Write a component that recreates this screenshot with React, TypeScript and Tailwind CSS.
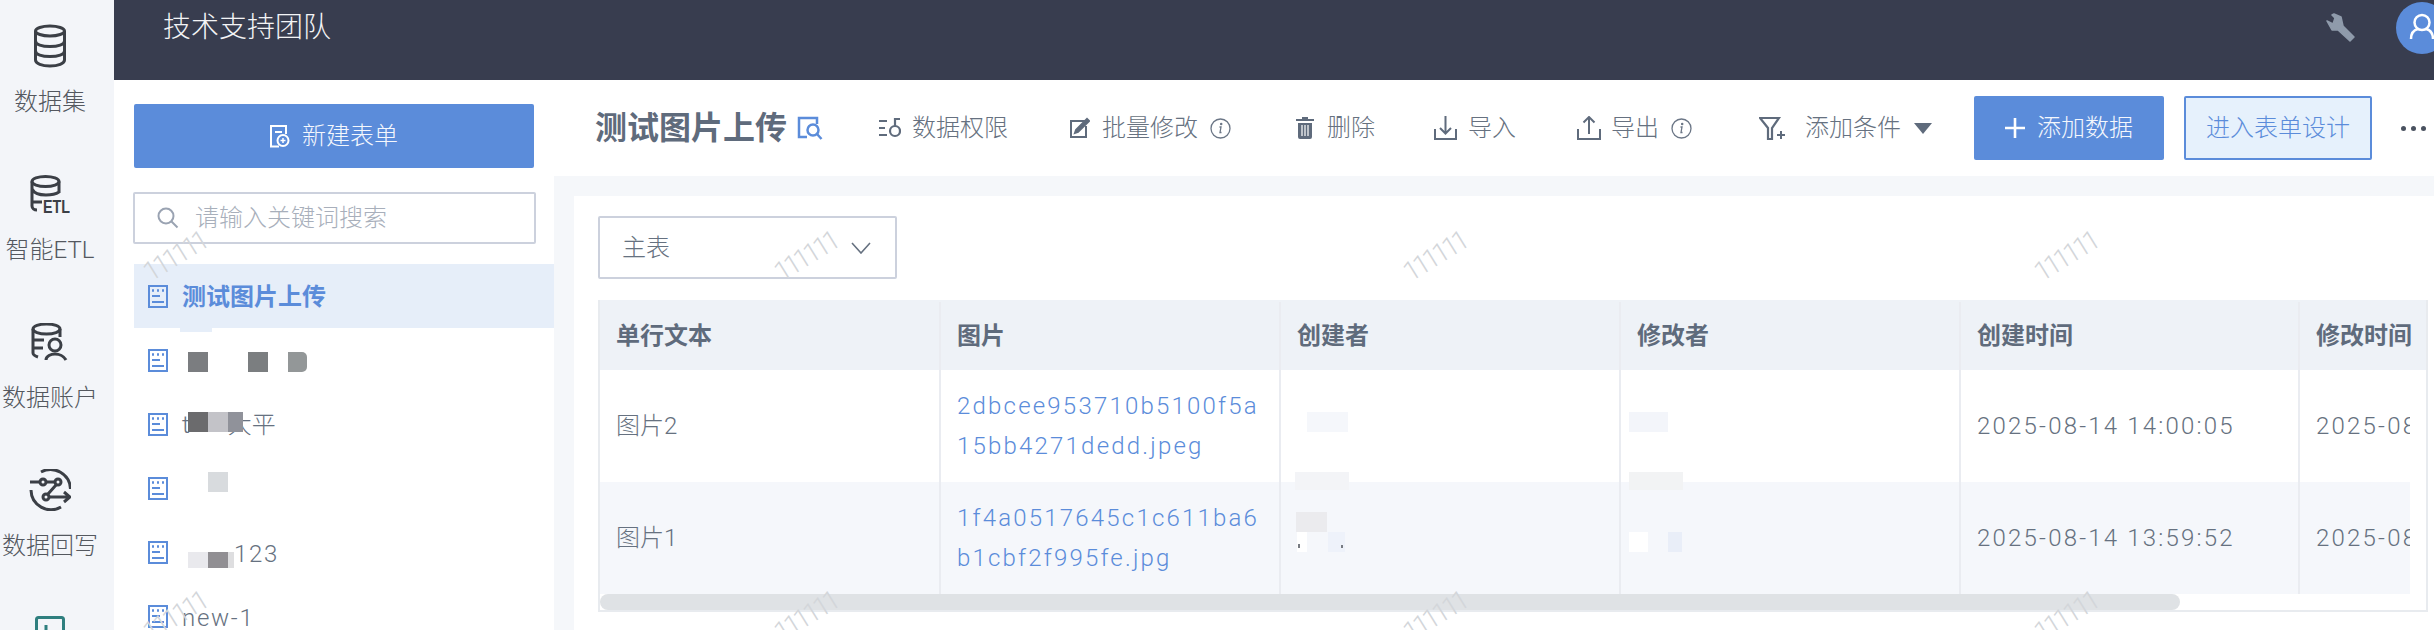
import React from "react";

const FONT = "font-['Roboto','Noto_Sans_CJK_SC',sans-serif]";

const RailIcon = ({ kind }: { kind: number }) => {
  if (kind === 0) {
    return (
      <svg width="36" height="44" viewBox="0 0 34 44" fill="none" stroke="#3b3f46" strokeWidth="3">
        <ellipse cx="17" cy="7" rx="14.5" ry="5" />
        <path d="M2.5 7v29c0 3.5 6.5 6 14.5 6s14.5-2.5 14.5-6V7" />
        <path d="M2.5 17c0 3.5 6.5 5.5 14.5 5.5s14.5-2 14.5-5.5M2.5 27c0 3.5 6.5 5.5 14.5 5.5s14.5-2 14.5-5.5" />
      </svg>
    );
  }
  if (kind === 1) {
    return (
      <svg width="40" height="39" viewBox="0 0 40 39" fill="none" stroke="#3b3f46" strokeWidth="3">
        <ellipse cx="15.5" cy="6.5" rx="13.5" ry="5" />
        <path d="M2 6.5V31c0 2 2 4 5 4M29 6.5V18M2 14c2 4 8 6 14 6 5 0 10-1 13-3M3 27h9" />
        <text x="13" y="38" fontFamily="'Liberation Sans',sans-serif" fontWeight="700" fontSize="18" fill="#3b3f46" stroke="none" textLength="27" lengthAdjust="spacingAndGlyphs">ETL</text>
      </svg>
    );
  }
  if (kind === 2) {
    return (
      <svg width="38" height="38" viewBox="0 0 38 38" fill="none" stroke="#3b3f46" strokeWidth="3">
        <ellipse cx="15.5" cy="6" rx="13.5" ry="5" />
        <path d="M2 6v24c0 2 2 3 5 4M29 6v8M3 17h10M3 25h9" />
        <circle cx="24" cy="22" r="6" />
        <path d="M15 37c0-4 5-6 9-6s9 2 11 6" />
      </svg>
    );
  }
  if (kind === 3) {
    return (
      <svg width="42" height="42" viewBox="0 0 42 42" fill="none" stroke="#3b3f46" strokeWidth="3">
        <path d="M12 3A20 20 0 0 1 41.5 20M2 21A20 20 0 0 0 32 38" />
        <path d="M1 13h10M17 13h9M27 16l-8 9M20 28h21M35 23l6 5-6 5" />
        <circle cx="14" cy="13" r="3" />
        <circle cx="29" cy="13" r="3" />
        <circle cx="17" cy="28" r="3" />
      </svg>
    );
  }
  return (
    <svg width="30" height="44" viewBox="0 0 30 44" fill="none" stroke="#2f7f7f" strokeWidth="3">
      <rect x="1.5" y="1.5" width="27" height="36" rx="2" />
      <path d="M11 9v9" />
    </svg>
  );
};

const railItems = [
  { label: "数据集", kind: 0 },
  { label: "智能ETL", kind: 1 },
  { label: "数据账户", kind: 2 },
  { label: "数据回写", kind: 3 },
  { label: "", kind: 4 },
];

const FormIcon = () => (
  <svg width="20" height="23" viewBox="0 0 20 23" fill="none" stroke="#5b8cda" strokeWidth="2">
    <rect x="1" y="1" width="18" height="21" />
    <path d="M4 5.5h2M9 5.5h2M14 5.5h2" strokeWidth="2.5" />
    <path d="M4 11h8M4 17h12" />
  </svg>
);

const Info = () => (
  <svg width="21" height="21" viewBox="0 0 21 21" fill="none" stroke="#6b7686" strokeWidth="1.3">
    <circle cx="10.5" cy="10.5" r="9.5" />
    <path d="M9.5 9H11l-1 5.5h1.5" />
    <circle cx="11.2" cy="6" r="0.6" fill="#6b7686" />
  </svg>
);

const ICON_GRAY = "#5f6b7c";

const ToolItem = ({
  icon,
  text,
  gap,
  after,
  className,
}: {
  icon: React.ReactNode;
  text: string;
  gap: string;
  after?: React.ReactNode;
  className: string;
}) => (
  <div className={`flex shrink-0 items-center ${className}`}>
    <span className={`flex shrink-0 items-center ${gap}`}>{icon}</span>
    <span className="text-[24px] leading-[32px] whitespace-nowrap text-[#667180]">{text}</span>
    {after}
  </div>
);

const Blot = ({ x, y, w, h, c, r }: { x: string; y: string; w: string; h: string; c: string; r?: string }) => (
  <span className={`absolute ${x} ${y} ${w} ${h} ${c} ${r ?? ""}`} />
);

const rows = [
  { name: "图片2", l1: "2dbcee953710b5100f5a", l2: "15bb4271dedd.jpeg", time: "2025-08-14 14:00:05", bg: "bg-white" },
  { name: "图片1", l1: "1f4a0517645c1c611ba6", l2: "b1cbf2f995fe.jpg", time: "2025-08-14 13:59:52", bg: "bg-[#f5f7fb]" },
];

const Cell = ({ children, w, border = true }: { children?: React.ReactNode; w: string; border?: boolean }) => (
  <div className={`relative flex shrink-0 flex-col justify-center pl-[16px] ${w} ${border ? "border-r-2 border-[#eaecf1]" : ""}`}>
    {children}
  </div>
);

const Watermarks = () => (
  <div className="pointer-events-none absolute inset-0 overflow-hidden">
    {[257, 617].map((y) =>
      [175, 806, 1435, 2066].map((x) => (
        <span
          key={`${x}-${y}`}
          className="absolute -translate-x-1/2 -translate-y-1/2 -rotate-[32deg] text-[27px] leading-none font-light tracking-[-3.6px] text-[#d3d6da]"
          style={{ left: x, top: y }}
        >
          111111
        </span>
      ))
    )}
  </div>
);

export default function App() {
  return (
    <div className={`relative flex h-[630px] w-[2434px] overflow-hidden bg-white font-light ${FONT}`}>
      <aside className="flex w-[114px] shrink-0 flex-col items-center bg-[#f3f5f9] pt-[24px] pr-[14px]">
        {railItems.map((item) => (
          <div key={item.kind} className="flex h-[148px] shrink-0 flex-col items-center">
            <div className="flex h-[44px] items-center">
              <RailIcon kind={item.kind} />
            </div>
            {item.label && (
              <span className="mt-[18px] text-[24px] leading-[32px] whitespace-nowrap text-[#54585f]">{item.label}</span>
            )}
          </div>
        ))}
      </aside>

      <div className="flex min-w-0 flex-1 flex-col">
        <header className="h-[80px] shrink-0 bg-[#383d4f]">
          <div className="flex h-[56px] items-center pl-[49px]">
            <span className="text-[28px] text-[#f3f4f6]">技术支持团队</span>
            <svg className="ml-auto" width="30" height="30" viewBox="0 0 30 30" fill="#8f9bab" stroke="#8f9bab" strokeLinejoin="round" strokeWidth="1.5">
              <path d="M1 8l6 3 2-6-3-3 2-1 7 3 2 9 11 11-4 4-12-11H6Z" />
            </svg>
            <div className="-mr-[14px] ml-[40px] h-[52px] w-[52px] shrink-0 rounded-full bg-[#5b8cda]">
              <svg width="52" height="52" viewBox="0 0 52 52" fill="none" stroke="#fff" strokeWidth="2.5">
                <circle cx="26" cy="20.5" r="7.5" />
                <path d="M15 37c0-7 3-9 7-10M37 37c0-7-3-9-7-10" />
              </svg>
            </div>
          </div>
        </header>

        <div className="flex min-h-0 flex-1">
          <div className="w-[440px] shrink-0 bg-white pt-[24px] pl-[20px]">
            <button className="flex h-[64px] w-[400px] items-center justify-center rounded-[2px] bg-[#5b8cda] text-[24px] text-[#f4f7fd]">
              <svg className="mr-[12px]" width="20" height="23" viewBox="0 0 20 23" fill="none" stroke="#fff" strokeWidth="2">
                <path d="M9 21.5H1V1h15v8M5 7h7" />
                <circle cx="13" cy="15.5" r="5.5" />
                <path d="M13 13v5M10.5 15.5h5" strokeWidth="1.5" />
              </svg>
              新建表单
            </button>
            <div className="mt-[24px] -ml-[1px] flex h-[52px] w-[403px] items-center rounded-[2px] border-2 border-[#ccd1dd] pl-[22px]">
              <svg width="22" height="22" viewBox="0 0 22 22" fill="none" stroke="#9aa3b2" strokeWidth="2">
                <circle cx="9" cy="9" r="7.5" />
                <path d="m14.5 14.5 6 6" />
              </svg>
              <span className="ml-[16px] text-[24px] text-[#a8afbb]">请输入关键词搜索</span>
            </div>

            <div className="mt-[20px] flex flex-col">
              <div className="flex h-[64px] items-center bg-[#e6eef9] pl-[14px]">
                <FormIcon />
                <span className="mt-[2px] ml-[14px] text-[24px] font-bold text-[#5b8cda]">测试图片上传</span>
              </div>
              <div className="relative flex h-[64px] items-center pl-[14px]">
                <FormIcon />
                <Blot x="left-[46px]" y="top-0" w="w-[32px]" h="h-[4px]" c="bg-[#e6eef9]" />
                <Blot x="left-[54px]" y="top-[24px]" w="w-[20px]" h="h-[20px]" c="bg-[#7b7d80]" />
                <Blot x="left-[114px]" y="top-[24px]" w="w-[20px]" h="h-[20px]" c="bg-[#7b7e80]" />
                <Blot x="left-[154px]" y="top-[24px]" w="w-[19px]" h="h-[20px]" c="bg-[#939798]" r="rounded-r-[5px]" />
              </div>
              <div className="relative flex h-[64px] items-center pl-[14px]">
                <FormIcon />
                <span className="mt-[2px] ml-[14px] text-[24px] text-[#667180]">t</span>
                <span className="mt-[2px] ml-[38px] text-[24px] text-[#667180]">大平</span>
                <Blot x="left-[54px]" y="top-[20px]" w="w-[20px]" h="h-[20px]" c="bg-[#6b6b6d]" />
                <Blot x="left-[74px]" y="top-[20px]" w="w-[20px]" h="h-[20px]" c="bg-[#c3c3c8]" />
                <Blot x="left-[94px]" y="top-[20px]" w="w-[15px]" h="h-[20px]" c="bg-[#90929a]" />
              </div>
              <div className="relative flex h-[64px] items-center pl-[14px]">
                <FormIcon />
                <Blot x="left-[74px]" y="top-[16px]" w="w-[20px]" h="h-[20px]" c="bg-[#d8dbde]" />
              </div>
              <div className="relative flex h-[64px] items-center pl-[14px]">
                <FormIcon />
                <span className="mt-[3px] ml-[66px] text-[24px] tracking-[1.7px] text-[#667180]">123</span>
                <Blot x="left-[54px]" y="top-[32px]" w="w-[20px]" h="h-[16px]" c="bg-[#e9e9ed]" />
                <Blot x="left-[74px]" y="top-[32px]" w="w-[20px]" h="h-[16px]" c="bg-[#918f93]" />
                <Blot x="left-[94px]" y="top-[32px]" w="w-[6px]" h="h-[16px]" c="bg-[#dedee0]" />
              </div>
              <div className="flex h-[64px] items-center pl-[14px]">
                <FormIcon />
                <span className="mt-[3px] ml-[14px] text-[24px] tracking-[1.7px] text-[#667180]">new-1</span>
              </div>
            </div>
          </div>

          <main className="flex min-w-0 flex-1 flex-col bg-[#f5f7fa]">
            <div className="flex h-[96px] shrink-0 items-center bg-white pl-[41px]">
              <h1 className="text-[32px] font-bold whitespace-nowrap text-[#5f6b7c]">测试图片上传</h1>
              <svg className="ml-[10px]" width="26" height="24" viewBox="0 0 26 24" fill="none" stroke="#5b8cda" strokeWidth="2.5">
                <path d="M10 21H2V2h18v6" />
                <circle cx="16" cy="14" r="5.5" />
                <path d="m20 18 4.5 5" />
              </svg>
              <ToolItem
                className="ml-[56px]"
                gap="mr-[11px]"
                text="数据权限"
                icon={
                  <svg width="22" height="20" viewBox="0 0 22 20" fill="none" stroke={ICON_GRAY} strokeWidth="2.2">
                    <path d="M0 3h8M0 10h6M0 17h8" />
                    <circle cx="16" cy="13" r="5" />
                    <path d="M16 8V1h5" />
                  </svg>
                }
              />
              <ToolItem
                className="ml-[62px]"
                gap="mr-[12px]"
                text="批量修改"
                after={<span className="ml-[12px]"><Info /></span>}
                icon={
                  <svg width="20" height="22" viewBox="0 0 20 22" fill="none" stroke={ICON_GRAY} strokeWidth="2">
                    <path d="M15 4H1v16h15V9" />
                    <path d="M6 13 17 2l2 2L8 15l-3 1Z" fill={ICON_GRAY} />
                  </svg>
                }
              />
              <ToolItem
                className="ml-[64px]"
                gap="mr-[12px]"
                text="删除"
                icon={
                  <svg width="20" height="22" viewBox="0 0 20 22" fill={ICON_GRAY}>
                    <path d="M7 0h6v2h6v2H1V2h6ZM3 6h14v14a2 2 0 0 1-2 2H5a2 2 0 0 1-2-2Z" />
                    <path d="M7 8v11M10 8v11M13 8v11" stroke="#fff" strokeWidth="1.2" />
                  </svg>
                }
              />
              <ToolItem
                className="ml-[59px]"
                gap="mr-[11px]"
                text="导入"
                icon={
                  <svg width="23" height="24" viewBox="0 0 23 24" fill="none" stroke={ICON_GRAY} strokeWidth="2">
                    <path d="M1 13v10h21V13M11.5 0v17M6 12l5.5 5.5L17 12" />
                  </svg>
                }
              />
              <ToolItem
                className="ml-[61px]"
                gap="mr-[10px]"
                text="导出"
                after={<span className="ml-[12px]"><Info /></span>}
                icon={
                  <svg width="24" height="24" viewBox="0 0 24 24" fill="none" stroke={ICON_GRAY} strokeWidth="2">
                    <path d="M1 13v10h22V13M12 18V1M6.5 6.5 12 1l5.5 5.5" />
                  </svg>
                }
              />
              <ToolItem
                className="ml-[67px]"
                gap="mr-[19px]"
                text="添加条件"
                after={
                  <svg className="ml-[13px]" width="18" height="11" viewBox="0 0 18 11" fill={ICON_GRAY}>
                    <path d="M0 0h18L9 11Z" />
                  </svg>
                }
                icon={
                  <svg width="27" height="23" viewBox="0 0 27 23" fill="none" stroke={ICON_GRAY} strokeWidth="2.2">
                    <path d="M1 1h19l-7 10v11H9V11Z" />
                    <path d="M18 18h8M22 14v8" strokeWidth="2" />
                  </svg>
                }
              />
              <button className="ml-[42px] flex h-[64px] w-[190px] shrink-0 items-center justify-center rounded-[2px] bg-[#5b8cda] text-[24px] text-[#f4f7fd]">
                <svg className="mr-[12px]" width="20" height="20" viewBox="0 0 20 20" stroke="#fff" strokeWidth="2.6">
                  <path d="M10 0v20M0 10h20" />
                </svg>
                添加数据
              </button>
              <button className="ml-[20px] flex h-[64px] w-[188px] shrink-0 items-center justify-center rounded-[2px] border-2 border-[#5b8cda] bg-[#e6f1fc] text-[24px] text-[#5b8cda]">
                进入表单设计
              </button>
              <div className="ml-[29px] flex gap-[5px]">
                <span className="h-[5px] w-[5px] rounded-full bg-[#4a5260]" />
                <span className="h-[5px] w-[5px] rounded-full bg-[#4a5260]" />
                <span className="h-[5px] w-[5px] rounded-full bg-[#4a5260]" />
              </div>
            </div>

            <div className="flex min-h-0 flex-1 pt-[20px] pl-[20px]">
              <section className="min-w-0 flex-1 bg-white pt-[20px] pl-[24px]">
                <div className="flex h-[63px] w-[299px] items-center justify-between rounded-[2px] border-2 border-[#ccd1dd] pr-[24px] pl-[22px]">
                  <span className="text-[24px] text-[#667180]">主表</span>
                  <svg width="20" height="12" viewBox="0 0 20 12" fill="none" stroke="#667180" strokeWidth="1.6">
                    <path d="m1 1 9 10 9-10" />
                  </svg>
                </div>

                <div className="mt-[21px] w-[1830px] border-2 border-t-0 border-[#e8ebef] text-[24px] text-[#667180]">
                  <div className="flex h-[70px] bg-[#eef2f7] pt-[2px] font-bold text-[#5f6b7c]">
                    <Cell w="w-[341px]">单行文本</Cell>
                    <Cell w="w-[340px]">图片</Cell>
                    <Cell w="w-[340px]">创建者</Cell>
                    <Cell w="w-[340px]">修改者</Cell>
                    <Cell w="w-[339px]">创建时间</Cell>
                    <Cell w="w-[126px]" border={false}>修改时间</Cell>
                  </div>
                  {rows.map((row, i) => (
                    <div key={row.name} className={`flex h-[112px] w-[1810px] overflow-hidden ${row.bg}`}>
                      <Cell w="w-[341px]">{row.name}</Cell>
                      <Cell w="w-[340px]">
                        <span className="leading-[40px] tracking-[2.2px] text-[#5b8cda]">{row.l1}</span>
                        <span className="leading-[40px] tracking-[2.2px] text-[#5b8cda]">{row.l2}</span>
                      </Cell>
                      <Cell w="w-[340px]">
                        {i === 0 ? (
                          <>
                            <Blot x="left-[26px]" y="top-[42px]" w="w-[41px]" h="h-[20px]" c="bg-[#f5f7fb]" />
                            <Blot x="left-[14px]" y="top-[102px]" w="w-[54px]" h="h-[10px]" c="bg-[#f3f4f7]" />
                          </>
                        ) : (
                          <>
                            <Blot x="left-[14px]" y="top-0" w="w-[54px]" h="h-[8px]" c="bg-[#f3f4f7]" />
                            <Blot x="left-[15px]" y="top-[30px]" w="w-[31px]" h="h-[20px]" c="bg-[#ebebee]" />
                            <Blot x="left-[16px]" y="top-[50px]" w="w-[10px]" h="h-[20px]" c="bg-white" />
                            <Blot x="left-[47px]" y="top-[50px]" w="w-[17px]" h="h-[20px]" c="bg-[#eef2fa]" />
                            <Blot x="left-[17px]" y="top-[62px]" w="w-[2px]" h="h-[4px]" c="bg-[#777b82]" />
                            <Blot x="left-[60px]" y="top-[63px]" w="w-[2px]" h="h-[3px]" c="bg-[#777b82]" />
                          </>
                        )}
                      </Cell>
                      <Cell w="w-[340px]">
                        {i === 0 ? (
                          <>
                            <Blot x="left-[8px]" y="top-[42px]" w="w-[39px]" h="h-[20px]" c="bg-[#f3f5fa]" />
                            <Blot x="left-[8px]" y="top-[102px]" w="w-[54px]" h="h-[10px]" c="bg-[#f2f3f4]" />
                          </>
                        ) : (
                          <>
                            <Blot x="left-[8px]" y="top-0" w="w-[54px]" h="h-[8px]" c="bg-[#f2f3f4]" />
                            <Blot x="left-[8px]" y="top-[50px]" w="w-[19px]" h="h-[20px]" c="bg-white" />
                            <Blot x="left-[47px]" y="top-[50px]" w="w-[14px]" h="h-[20px]" c="bg-[#e9eef8]" />
                          </>
                        )}
                      </Cell>
                      <Cell w="w-[339px]"><span className="tracking-[2.2px] whitespace-nowrap">{row.time}</span></Cell>
                      <Cell w="w-[110px]" border={false}><span className="tracking-[2.2px] whitespace-nowrap">{row.time}</span></Cell>
                    </div>
                  ))}
                  <div className="h-[16px] bg-white">
                    <div className="h-[16px] w-[1580px] rounded-full bg-[#dfe2e5]" />
                  </div>
                </div>
              </section>
            </div>
          </main>
        </div>
      </div>
      <Watermarks />
    </div>
  );
}
